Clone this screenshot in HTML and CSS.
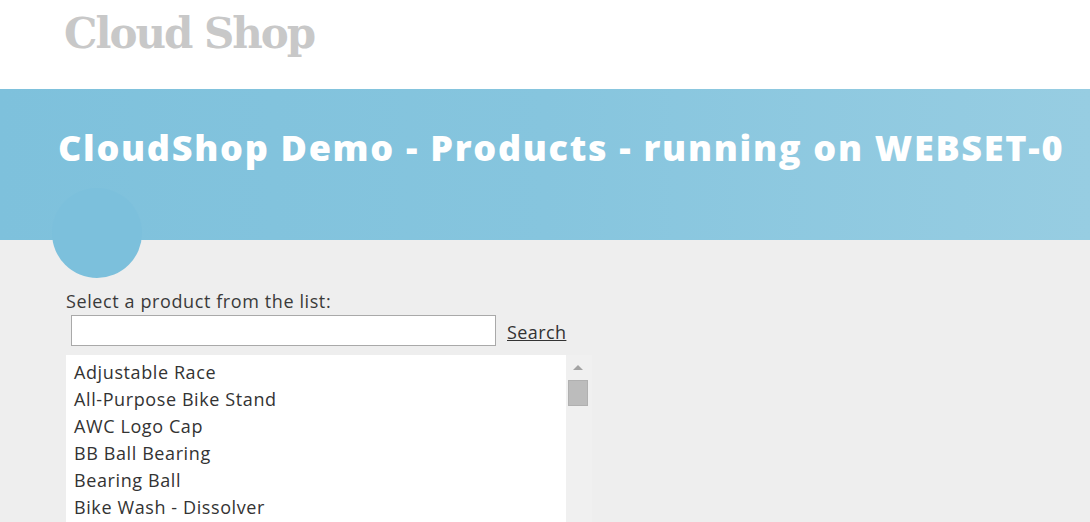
FILE: index.html
```html
<!DOCTYPE html>
<html>
<head>
<meta charset="utf-8">
<link rel="stylesheet" href="styles.css">
</head>
<body>
<header class="top">
  <div class="logo">Cloud Shop</div>
</header>
<section class="banner">
  <h1 class="title">CloudShop Demo - Products - running on WEBSET-0</h1>
  <div class="bubble"></div>
</section>
<main class="content">
  <div class="label">Select a product from the list:</div>
  <div class="searchrow">
    <div class="input"></div>
    <a class="search" href="#">Search</a>
  </div>
  <div class="listbox">
    <ul class="items">
      <li>Adjustable Race</li>
      <li>All-Purpose Bike Stand</li>
      <li>AWC Logo Cap</li>
      <li>BB Ball Bearing</li>
      <li>Bearing Ball</li>
      <li>Bike Wash - Dissolver</li>
    </ul>
    <div class="scrollbar">
      <div class="arrow"></div>
      <div class="thumb"></div>
    </div>
  </div>
</main>
</body>
</html>
```

FILE: styles.css
```css
html, body {
  margin: 0;
  padding: 0;
  height: 100%;
}
body {
  background: #eeeeee;
  font-family: "Open Sans", "Noto Sans", sans-serif;
  color: #333333;
  overflow: hidden;
}
.top {
  background: #ffffff;
  height: 89px;
  box-sizing: border-box;
  padding: 8px 0 0 64px;
}
.logo {
  font-family: "DejaVu Serif", serif;
  font-weight: bold;
  font-size: 42px;
  line-height: 52px;
  color: #c8c8c8;
  letter-spacing: -2px;
}
.banner {
  position: relative;
  height: 151px;
  background: linear-gradient(90deg, #7ec1dc 0%, #86c5de 50%, #97cde2 100%);
  box-sizing: border-box;
  padding: 34px 0 0 58px;
}
.title {
  margin: 0;
  font-size: 36px;
  font-weight: 800;
  color: #ffffff;
  line-height: 50px;
  letter-spacing: 1.7px;
  white-space: nowrap;
}
.bubble {
  position: absolute;
  left: 52px;
  top: 99px;
  width: 90px;
  height: 90px;
  border-radius: 50%;
  background: #7cc0dc;
  z-index: 0;
}
.content {
  padding: 50px 0 0 66px;
}
.label {
  font-size: 18px;
  line-height: 22px;
  letter-spacing: 0.6px;
  color: #3a3a3a;
}
.searchrow {
  display: flex;
  align-items: flex-end;
  gap: 11px;
  margin: 3px 0 0 5px;
}
.input {
  width: 423px;
  height: 29px;
  border: 1px solid #a9a9a9;
  background: #ffffff;
}
.search {
  font-size: 18px;
  line-height: 22px;
  letter-spacing: 0.4px;
  color: #333333;
  text-decoration: underline;
  margin-bottom: 3px;
}
.listbox {
  display: flex;
  width: 526px;
  height: 180px;
  margin-top: 9px;
  background: #ffffff;
}
.items {
  list-style: none;
  margin: 0;
  padding: 4px 0 0 8px;
  flex: 1;
  font-size: 18px;
  line-height: 27px;
  letter-spacing: 0.6px;
  color: #333333;
}
.scrollbar {
  width: 26px;
  background: #f0f0f0;
  display: flex;
  flex-direction: column;
  align-items: center;
}
.arrow {
  margin: 10px 0 0 -2px;
  width: 0;
  height: 0;
  border-left: 5px solid transparent;
  border-right: 5px solid transparent;
  border-bottom: 5px solid #a3a3a3;
}
.thumb {
  margin: 10px 0 0 -2px;
  width: 20px;
  height: 26px;
  background: #bcbcbc;
  border: 1px solid #b0b0b0;
  box-sizing: border-box;
}
```
